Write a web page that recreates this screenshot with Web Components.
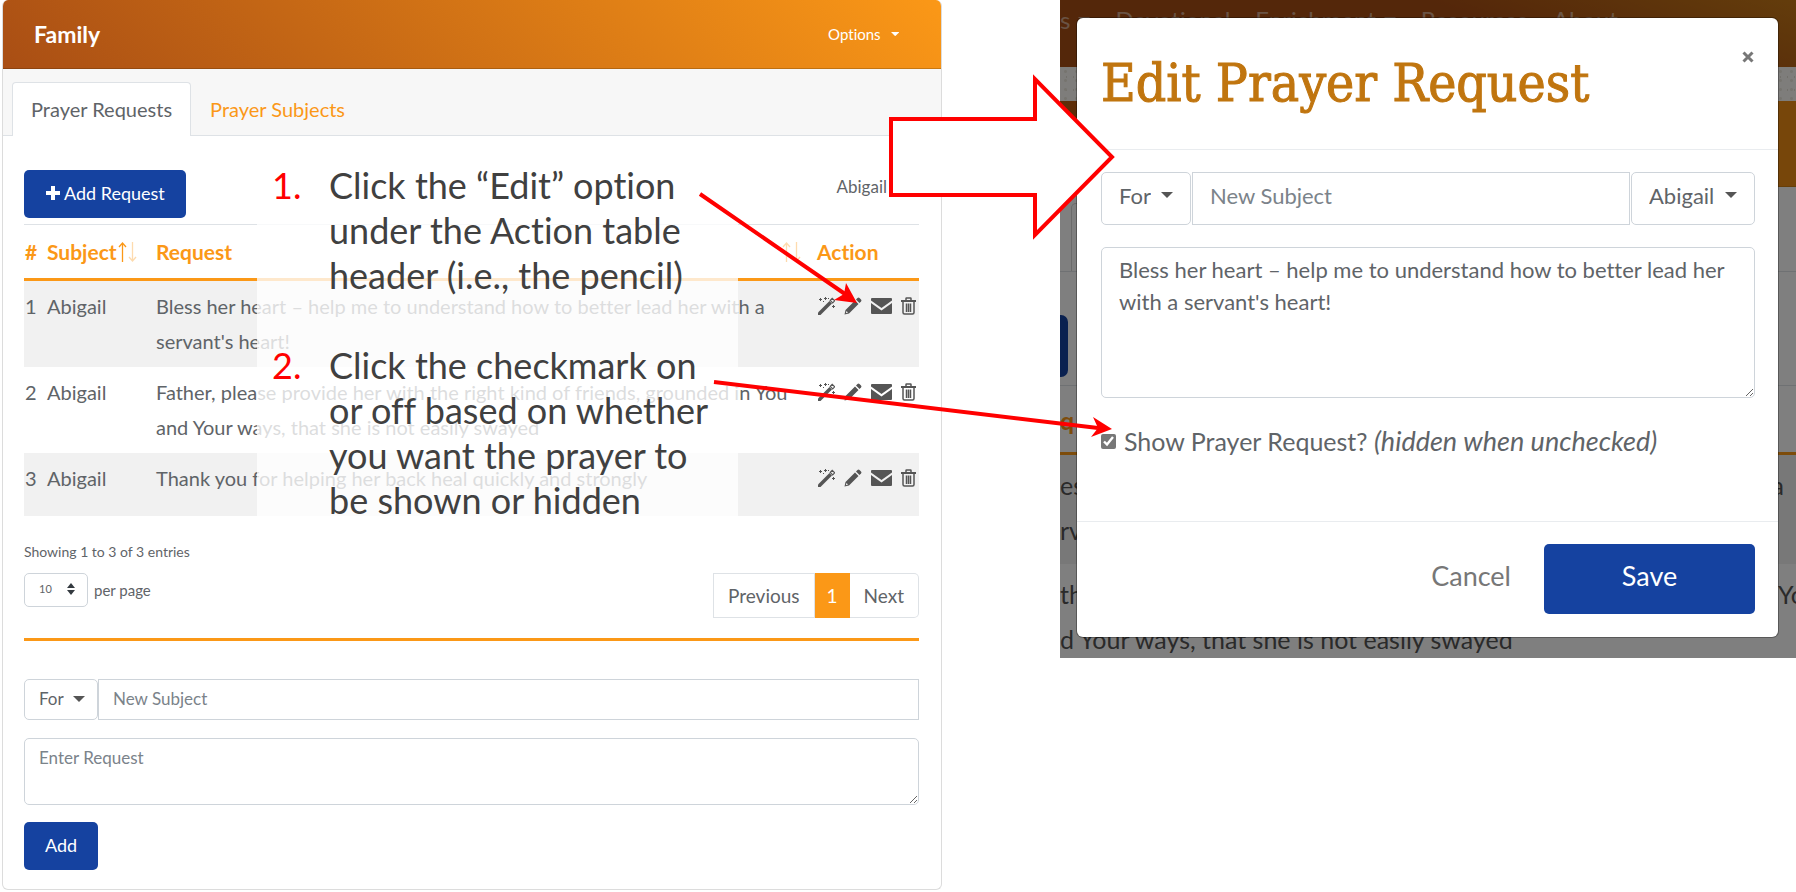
<!DOCTYPE html>
<html lang="en">
<head>
<meta charset="utf-8">
<title>Family – Edit Prayer Request</title>
<style>
	:root {
		--orange: #fb9817;
		--rust: #a94e14;
		--blue: #1542a0;
		--line: #dee2e6;
		--field: #ced4da;
		--ink: #5f6468;
		--stripe: #f1f1f1;
	}
	body {
		margin: 0;
		background: #fff;
		color: var(--ink);
		font: 20px/1.5 Lato, 'Open Sans', sans-serif;
		font-variant-ligatures: none;
	}
	main {
		position: relative;
		display: grid;
		grid-template-columns: 940fr 736fr;
		column-gap: 118px;
		align-items: start;
		padding-left: 2px;
	}
</style>
</head>
<body>
<main>
	<family-card></family-card>
	<edit-scene></edit-scene>
	<how-to-notes>
		<how-to-step number="1.">Click the “Edit” option under the Action table header (i.e., the pencil)</how-to-step>
		<how-to-step number="2.">Click the checkmark on or off based on whether you want the prayer to be shown or hidden</how-to-step>
	</how-to-notes>
	<callout-arrows></callout-arrows>
</main>

<script>
const html = String.raw;

const define = (name, markup) => {
	customElements.define(name, class extends HTMLElement {
		constructor() {
			super();
			const shadow = this.attachShadow({ mode: 'open' });
			shadow.innerHTML = typeof markup === 'function' ? markup(this) : markup;
		}
	});
};

const attr = (el, name, fallback = '') => el.getAttribute(name) || fallback;

const ICONS = {
	plus: [16, 16, '<path d="M6 1h4v5h5v4h-5v5H6v-5H1V6h5z"/>'],
	wand: [18, 18, '<path d="M1 15.500 12.500 4l2.500 2.500L3.500 18 1 18z" /><path d="m13.200 3.300 2-2 2.500 2.500-2 2z" fill="none" stroke="currentColor" stroke-width="1.200"/><path d="M3 1h1v1h1v1H4v1H3V3H2V2h1zM8 0h1v1h1v1H9v1H8V2H7V1h1zM6 4h1v1H6zM16 8h1v1h1v1h-1v1h-1v-1h-1V9h1zM11 1h1v1h-1z"/>'],
	pencil: [18, 18, '<path d="M11 3.500 14.500 7 5 16.500 0.500 17.500 1.500 13zM2.500 14l-.7 2.200 2.200-.7z" fill-rule="evenodd"/><path d="m12 2.500 1.500-1.500q1-1 2 0L17 2.500q1 1 0 2L15.500 6z"/>'],
	mail: [21, 16, '<path d="M1 0h19q1 0 1 1v1.500L10.500 10 0 2.500V1q0-1 1-1z"/><path d="M0 5l10.500 7.500L21 5v10q0 1-1 1H1q-1 0-1-1z"/>'],
	trash: [15, 18, '<path d="M5 3V1.500Q5 1 5.500 1h4q.5 0 .5.500V3" fill="none" stroke="currentColor" stroke-width="1.500"/><path d="M0 3h15v2H0z"/><path d="M2 5v10.500q0 1.500 1.500 1.500h8q1.500 0 1.500-1.500V5M5.500 6.500v8.500M7.500 6.500v8.500M9.500 6.500v8.500" fill="none" stroke="currentColor" stroke-width="1.500"/>'],
	caret: [12, 6, '<path d="M0 0h12L6 6z"/>'],
	'sort-up': [9, 20, '<path d="M4.500 20V1M1 5l3.500-4L8 5" stroke="currentColor" stroke-width="1.300" fill="none"/>'],
	'sort-down': [9, 20, '<path d="M4.500 0v19M1 15l3.500 4L8 15" stroke="currentColor" stroke-width="1.300" fill="none"/>'],
	updown: [8, 12, '<path d="M0 5 4 0l4 5zM0 7h8l-4 5z"/>'],
	close: [12, 12, '<path d="m1.500 1.500 9 9m0-9-9 9" stroke="currentColor" stroke-width="3" fill="none"/>'],
};

define('ui-icon', (el) => {
	const [w, h, body] = ICONS[attr(el, 'name')];
	const scale = Number(attr(el, 'scale', '1'));
	return html`
		<style>
			:host { display: inline-block; flex: none; line-height: 0; }
			svg { fill: currentColor; display: block; }
		</style>
		<svg width="${w * scale}" height="${h * scale}" viewBox="0 0 ${w} ${h}" aria-hidden="true">${body}</svg>
	`;
});

define('ui-button', html`
	<style>
		:host { display: inline-block; }
		button {
			display: flex;
			align-items: center;
			justify-content: center;
			gap: 3px;
			width: 100%;
			min-height: var(--button-height, 48px);
			padding: 0 21px 2px;
			border: 0;
			border-radius: 5px;
			background: var(--blue);
			color: #fff;
			font: inherit;
			font-size: var(--button-size, 18px);
		}
	</style>
	<button type="button"><slot></slot></button>
`);

/* Drop-down with its own caret laid over the right end */
define('drop-select', (el) => html`
	<style>
		:host { display: grid; align-items: center; flex: none; color: var(--ink); }
		select, ui-icon { grid-area: 1 / 1; }
		select {
			appearance: none;
			height: 100%;
			padding: 0 var(--select-end, 33px) var(--text-lift, 2px) var(--select-start, 14px);
			border: 1px solid var(--field);
			border-radius: 5px;
			background: #fff;
			color: inherit;
			font: inherit;
		}
		ui-icon { justify-self: end; margin: 0 var(--caret-end, 13px) var(--text-lift, 2px) 0; color: var(--caret, #555); pointer-events: none; }
	</style>
	<select aria-label="${attr(el, 'label')}"><option>${attr(el, 'value')}</option></select>
	<ui-icon name="${attr(el, 'icon', 'caret')}"></ui-icon>
`);

define('text-field', (el) => html`
	<style>
		:host { display: block; flex: 1; min-width: 0; }
		input {
			box-sizing: border-box;
			display: block;
			width: 100%;
			height: 100%;
			padding: 0 0 var(--text-lift, 2px) var(--field-pad, 14px);
			border: 1px solid var(--field);
			background: #fff;
			color: inherit;
			font: inherit;
		}
		input::placeholder { color: #7b838a; opacity: 1; }
	</style>
	<input type="text" aria-label="Subject" placeholder="${attr(el, 'placeholder')}">
`);

define('text-block', (el) => html`
	<style>
		:host { display: block; }
		textarea {
			box-sizing: border-box;
			display: block;
			width: 100%;
			height: var(--block-height, 67px);
			padding: var(--block-pad, 6px 14px);
			border: 1px solid var(--field);
			border-radius: 5px;
			background: #fff;
			color: inherit;
			font: inherit;
			resize: vertical;
		}
		textarea::placeholder { color: #7b838a; opacity: 1; }
	</style>
	<textarea aria-label="Request" placeholder="${attr(el, 'placeholder')}">${attr(el, 'value')}</textarea>
`);

define('tab-bar', html`
	<style>
		:host { display: block; background: #f7f7f7; padding: 13px 10px 0 9px; border-bottom: 1px solid var(--line); }
		nav { display: flex; margin-bottom: -1px; }
		a {
			padding: 0 18px;
			border: 1px solid transparent;
			border-bottom: 0;
			border-radius: 4px 4px 0 0;
			color: var(--orange);
			line-height: 53px;
			text-decoration: none;
		}
		a.active { background: #fff; border-color: var(--line); color: var(--ink); }
	</style>
	<nav>
		<a class="active" href="#requests">Prayer Requests</a>
		<a href="#subjects">Prayer Subjects</a>
	</nav>
`);

const REQUESTS = [
	['Abigail', "Bless her heart – help me to understand how to better lead her with a servant's heart!"],
	['Abigail', 'Father, please provide her with the right kind of friends, grounded in You and Your ways, that she is not easily swayed'],
	['Abigail', 'Thank you for helping her back heal quickly and strongly'],
];

define('row-actions', html`
	<style>
		:host { display: flex; align-items: center; gap: 9px; height: 36px; color: #555; }
		button { display: block; padding: 0; border: 0; background: none; color: inherit; }
	</style>
	<button type="button" aria-label="Answer"><ui-icon name="wand"></ui-icon></button>
	<button type="button" aria-label="Edit"><ui-icon name="pencil"></ui-icon></button>
	<button type="button" aria-label="Email"><ui-icon name="mail"></ui-icon></button>
	<button type="button" aria-label="Delete"><ui-icon name="trash"></ui-icon></button>
`);

define('request-table', html`
	<style>
		:host { display: block; }
		table { width: 100%; border-collapse: collapse; table-layout: fixed; }
		th {
			height: 53px;
			padding: 0;
			border-top: 1px solid var(--line);
			border-bottom: 3px solid var(--orange);
			color: var(--orange);
			font-size: 21px;
			font-weight: 700;
			text-align: left;
			white-space: nowrap;
		}
		th div { display: flex; align-items: center; gap: 1px; }
		.spread { justify-content: space-between; padding-right: 16px; }
		td { padding: 8px 0; line-height: 35px; vertical-align: top; }
		td:first-child, th:first-child { padding-left: 1px; }
		tbody tr:nth-child(odd) { background: var(--stripe); }
		tbody tr:last-child td { height: 47px; }
		.number { width: 23px; }
		.subject { width: 109px; }
		.action { width: 102px; }
		.faint { opacity: .35; }
	</style>
	<table>
		<colgroup><col class="number"><col class="subject"><col><col class="action"></colgroup>
		<thead>
			<tr>
				<th>#</th>
				<th><div>Subject<ui-icon name="sort-up"></ui-icon><ui-icon class="faint" name="sort-down"></ui-icon></div></th>
				<th><div class="spread">Request<div class="faint"><ui-icon name="sort-up"></ui-icon><ui-icon name="sort-down"></ui-icon></div></div></th>
				<th>Action</th>
			</tr>
		</thead>
		<tbody>
			${REQUESTS.map(([subject, text], i) => html`
				<tr><td>${i + 1}</td><td>${subject}</td><td>${text}</td><td><row-actions></row-actions></td></tr>
			`).join('')}
		</tbody>
	</table>
`);

define('page-links', html`
	<style>
		:host { display: flex; font-size: 19px; line-height: 43px; }
		a { padding: 0 14px; border: 1px solid var(--line); color: var(--ink); text-decoration: none; }
		a:first-child { border-radius: 5px 0 0 5px; border-right: 0; }
		a:last-child { border-radius: 0 5px 5px 0; border-left: 0; }
		.current { padding: 0 11px; background: var(--orange); border-color: var(--orange); color: #fff; }
	</style>
	<a href="#previous">Previous</a>
	<a class="current" href="#1">1</a>
	<a href="#next">Next</a>
`);

define('family-card', html`
	<style>
		:host { display: block; border: 1px solid #dcdcdc; border-top: 0; border-radius: 6px; overflow: hidden; background: #fff; }
		header {
			display: flex;
			align-items: center;
			justify-content: space-between;
			height: 69px;
			padding: 0 42px 0 31px;
			border-bottom: 1px solid rgba(0, 0, 0, .2);
			background: linear-gradient(45deg, var(--rust), var(--orange));
			color: #fff;
			box-sizing: border-box;
		}
		h2 { margin: 0; font-size: 23px; }
		.options { display: flex; align-items: center; gap: 10px; padding: 0; border: 0; background: none; color: inherit; font: inherit; font-size: 15px; }
		.body { padding: 34px 22px 19px 21px; }
		.tools { display: flex; justify-content: space-between; margin-bottom: 6px; }
		.who { display: flex; align-items: center; gap: 8px; height: 34px; padding-right: 12px; font-size: 17px; }
		.entries { margin-top: 24px; font-size: 14px; line-height: 24px; }
		.paging { display: flex; justify-content: space-between; align-items: flex-start; margin-top: 9px; }
		.size { display: flex; align-items: center; gap: 6px; font-size: 15px; height: 34px; }
		.size drop-select { height: 34px; font-size: 11px; width: 64px; --caret: #343a40; }
		hr { height: 3px; margin: 20px 0 38px; border: 0; background: var(--orange); }
		.group { display: flex; height: 41px; margin-bottom: 18px; font-size: 17px; }
		text-block { margin-bottom: 17px; font-size: 17px; }
	</style>
	<header>
		<h2>Family</h2>
		<button class="options" type="button">Options <ui-icon name="caret" scale=".7"></ui-icon></button>
	</header>
	<tab-bar></tab-bar>
	<div class="body">
		<div class="tools">
			<ui-button><ui-icon name="plus"></ui-icon>Add Request</ui-button>
			<div class="who">Abigail <ui-icon name="caret"></ui-icon></div>
		</div>
		<request-table></request-table>
		<div class="entries">Showing 1 to 3 of 3 entries</div>
		<div class="paging">
			<div class="size"><drop-select label="Entries per page" value="10" icon="updown"></drop-select> per page</div>
			<page-links></page-links>
		</div>
		<hr>
		<div class="group">
			<drop-select label="For" value="For"></drop-select>
			<text-field placeholder="New Subject"></text-field>
		</div>
		<text-block placeholder="Enter Request"></text-block>
		<ui-button>Add</ui-button>
	</div>
`);

/* The enlarged page that shows round the edges of the dialog */
define('page-behind', html`
	<style>
		:host { display: block; overflow: hidden; background: #fff; font-size: 25px; line-height: 45px; color: #555; white-space: nowrap; }
		nav {
			display: flex;
			gap: 25px;
			height: 67px;
			background: linear-gradient(20deg, var(--rust) 60%, #c87a18);
			color: rgba(255, 255, 255, .5);
			font-size: 24px;
		}
		nav span { display: flex; align-items: center; gap: 8px; height: 39px; }
		.paper {
			height: 34px;
			background: radial-gradient(circle, #ece8de 1px, transparent 2px) 0 0 / 11px 9px, radial-gradient(circle, #e4e0d6 1px, transparent 1px) 3px 4px / 7px 13px, #fdfbf6;
		}
		.head { height: 85px; border-bottom: 1px solid #cf7c10; background: linear-gradient(45deg, #b65510, #ef8d14 90%); }
		.tabs { display: flex; align-items: end; height: 85px; border-bottom: 1px solid var(--line); box-sizing: border-box; }
		.tab { width: 200px; height: 67px; margin-left: 11px; border: 1px solid #d5d5d5; border-bottom: 0; border-radius: 5px 5px 0 0; }
		.add { width: 8px; height: 62px; margin: 43px 0 8px; border-radius: 0 7px 7px 0; background: var(--blue); }
		.th { height: 66px; border-top: 1px solid var(--line); border-bottom: 3px solid var(--orange); color: var(--orange); font-weight: 700; line-height: 68px; }
		.row { padding: 8px 0 11px; }
		.odd { background: var(--stripe); }
		.row div { display: flex; justify-content: space-between; }
		.a { padding-right: 12px; }
		.yo { width: 18px; }
	</style>
	<nav>
		<span>s <ui-icon name="caret"></ui-icon></span><span>Devotional</span><span>Enrichment <ui-icon name="caret"></ui-icon></span><span>Resources</span><span>About</span>
	</nav>
	<div class="paper"></div>
	<div class="head"></div>
	<div class="tabs"><div class="tab"></div></div>
	<div class="add"></div>
	<div class="th">q</div>
	<div class="row odd">
		<div><span>es</span><span class="a">a</span></div>
		<div>rv</div>
	</div>
	<div class="row">
		<div><span>th</span><span class="yo">Yo</span></div>
		<div>d Your ways, that she is not easily swayed</div>
	</div>
`);

define('edit-dialog', html`
	<style>
		:host { display: block; border-radius: 6px; background: #fff; box-shadow: 0 0 0 1px rgba(0, 0, 0, .3); font-size: 22px; }
		header {
			display: flex;
			justify-content: space-between;
			align-items: flex-start;
			padding: 31px 24px 33px;
			border-bottom: 1px solid #e9ecef;
		}
		h1 { margin: 0; color: #c0750f; font: 53px/67px 'DejaVu Serif Condensed', 'DejaVu Serif', serif; -webkit-text-stroke: 1px #c0750f; }
		.close { margin-top: 2px; padding: 0; border: 0; background: none; color: #777; }
		.body { padding: 22px 23px 62px 24px; }
		.group {
			display: flex;
			gap: 1px;
			height: 53px;
			margin-bottom: 22px;
			--select-start: 17px;
			--select-end: 39px;
			--caret-end: 18px;
			--field-pad: 17px;
			--text-lift: 7px;
		}
		text-block { --block-height: 151px; --block-pad: 6px 17px; line-height: 32px; margin-bottom: 25px; }
		label { display: flex; align-items: center; gap: 8px; font-size: 25px; line-height: 36px; white-space: nowrap; }
		input { width: 15px; height: 15px; margin: 0; accent-color: #777; }
		i { font-size: 27px; }
		footer { display: flex; justify-content: flex-end; align-items: center; gap: 33px; padding: 22px 23px 23px; border-top: 1px solid #e9ecef; font-size: 27px; }
		.cancel { padding: 0 0 5px; border: 0; background: none; color: #777; font: inherit; }
		footer ui-button { width: 211px; --button-height: 70px; --button-size: 27px; }
		footer span { padding-bottom: 3px; }
	</style>
	<header>
		<h1>Edit Prayer Request</h1>
		<button class="close" type="button" aria-label="Close"><ui-icon name="close"></ui-icon></button>
	</header>
	<div class="body">
		<div class="group">
			<drop-select label="For" value="For"></drop-select>
			<text-field placeholder="New Subject"></text-field>
			<drop-select label="Subject" value="Abigail"></drop-select>
		</div>
		<text-block value="Bless her heart – help me to understand how to better lead her with a servant's heart!"></text-block>
		<label><input type="checkbox" checked><span>Show Prayer Request? <i>(hidden when unchecked)</i></span></label>
	</div>
	<footer>
		<button class="cancel" type="button">Cancel</button>
		<ui-button><span>Save</span></ui-button>
	</footer>
`);

define('edit-scene', html`
	<style>
		:host { display: grid; }
		page-behind, .scrim, edit-dialog { grid-area: 1 / 1; }
		page-behind { height: 0; min-height: 100%; }
		.scrim { background: rgba(0, 0, 0, .5); }
		edit-dialog { margin: 18px 18px 21px 17px; }
	</style>
	<page-behind></page-behind>
	<div class="scrim"></div>
	<edit-dialog></edit-dialog>
`);

define('how-to-step', (el) => html`
	<style>
		:host { display: grid; grid-template-columns: 57px 400px; }
		.number { color: #f00; }
	</style>
	<span class="number">${attr(el, 'number')}</span><span><slot></slot></span>
`);

/* Translucent sheet of instructions over the table */
define('how-to-notes', html`
	<style>
		:host {
			position: absolute;
			left: 257px;
			top: 163px;
			display: flex;
			flex-direction: column;
			gap: 45px;
			box-sizing: border-box;
			width: 481px;
			height: 353px;
			padding-left: 15px;
			background: rgba(255, 255, 255, .78);
			color: #404040;
			font-size: 36px;
			line-height: 45px;
		}
	</style>
	<slot></slot>
`);

define('callout-arrows', html`
	<style>
		:host { position: absolute; inset: 0; pointer-events: none; }
		svg { display: block; width: 100%; height: auto; }
	</style>
	<svg viewBox="0 0 1796 892" aria-hidden="true">
		<path d="M891 119H1035V79L1112 157 1035 235V195H891Z" fill="#fff" stroke="#f00" stroke-width="4"/>
		<g stroke="#f00" stroke-width="4">
			<path d="M700 194 845 294M714 382 1098 428"/>
		</g>
		<g fill="#f00">
			<path d="M857 303 834 300 844 294 846 283Z"/>
			<path d="M1112 429 1091 437 1098 428 1093 417Z"/>
		</g>
	</svg>
`);
</script>
</body>
</html>
